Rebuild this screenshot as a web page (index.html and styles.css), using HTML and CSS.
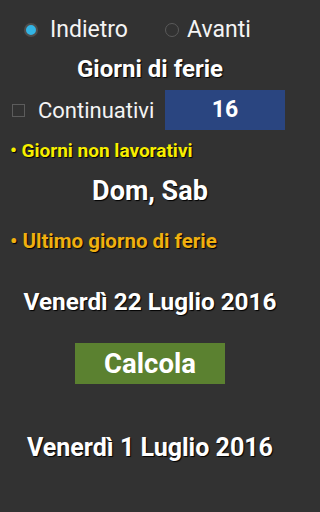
FILE: index.html
```html
<!DOCTYPE html>
<html lang="it">
<head>
<meta charset="utf-8">
<link rel="stylesheet" href="styles.css">
</head>
<body>
<div class="screen">
  <div class="radios">
    <div class="radio radio-first"><span class="dot checked"></span><span class="radio-label">Indietro</span></div>
    <div class="radio"><span class="dot"></span><span class="radio-label">Avanti</span></div>
  </div>
  <div class="title">Giorni di ferie</div>
  <div class="days-row">
    <div class="check-group"><span class="box"></span><span class="check-label">Continuativi</span></div>
    <div class="days-field">16</div>
  </div>
  <div class="heading yellow">• Giorni non lavorativi</div>
  <div class="value">Dom, Sab</div>
  <div class="heading orange">• Ultimo giorno di ferie</div>
  <div class="date date-first">Venerdì 22 Luglio 2016</div>
  <div class="btn-wrap"><div class="btn">Calcola</div></div>
  <div class="date date-result">Venerdì 1 Luglio 2016</div>
</div>
</body>
</html>
```
FILE: styles.css
```css
html, body {
  margin: 0;
  padding: 0;
  background: #323232;
}
.screen {
  width: 300px;
  height: 512px;
  background: #323232;
  font-family: Roboto, "Noto Sans", sans-serif;
  color: #ffffff;
  overflow: hidden;
}
.radios {
  display: flex;
  padding: 16px 0 0 24px;
  height: 28px;
  line-height: 28px;
  font-size: 23px;
}
.radio {
  display: flex;
  align-items: center;
}
.radio-first {
  width: 141px;
}
.dot {
  box-sizing: border-box;
  width: 14px;
  height: 14px;
  border-radius: 50%;
  border: 1px solid #5a5a5a;
  margin-right: 8px;
  flex: none;
}
.dot.checked {
  border: 2.5px solid #4e4e4e;
  background: #33b5e5;
  margin-right: 12px;
}
.radio-label {
  color: #f4f4f4;
}
.title {
  margin-top: 12px;
  text-align: center;
  font-weight: 700;
  font-size: 24px;
  line-height: 26px;
  text-shadow: 1px 1px 1px #000;
}
.days-row {
  display: flex;
  align-items: center;
  margin-top: 8px;
  height: 40px;
}
.check-group {
  display: flex;
  align-items: center;
  width: 165px;
}
.box {
  width: 11px;
  height: 11px;
  border: 1px solid #5c5c5c;
  margin: 0 13px 0 12px;
  flex: none;
}
.check-label {
  font-size: 22px;
  color: #f4f4f4;
}
.days-field {
  width: 120px;
  height: 40px;
  background: #2a4580;
  text-align: center;
  line-height: 40px;
  font-size: 23px;
  font-weight: 700;
}
.heading {
  padding-left: 10px;
  font-weight: 700;
  line-height: 22px;
  text-shadow: 1px 1px 1px #000;
}
.yellow {
  color: #f7ef00;
  font-size: 19px;
  margin-top: 10px;
}
.orange {
  color: #f0b010;
  font-size: 20.5px;
  margin-top: 24px;
}
.value {
  margin-top: 14px;
  text-align: center;
  font-weight: 700;
  font-size: 27px;
  line-height: 30px;
  text-shadow: 1px 1px 1px #000;
}
.date {
  text-align: center;
  font-weight: 700;
  line-height: 28px;
  text-shadow: 1px 1px 1px #000;
}
.date-first {
  font-size: 24.3px;
  margin-top: 36px;
}
.btn-wrap {
  display: flex;
  justify-content: center;
  margin-top: 27px;
}
.btn {
  width: 150px;
  height: 41px;
  background: #5b8130;
  text-align: center;
  line-height: 41px;
  font-size: 27.5px;
  font-weight: 700;
}
.date-result {
  font-size: 25px;
  margin-top: 50px;
}
```
